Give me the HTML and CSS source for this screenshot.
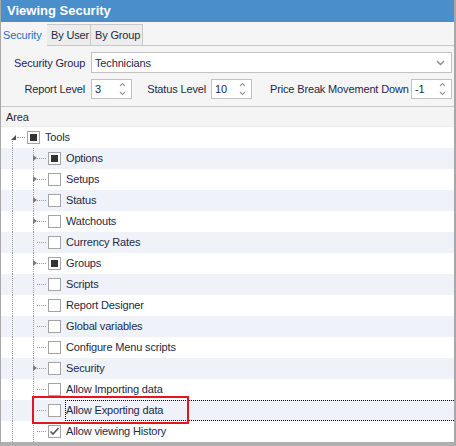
FILE: index.html
```html
<!DOCTYPE html>
<html>

<head>
  <meta charset="utf-8">
  <title>Viewing Security</title>
  <link rel="stylesheet" href="styles.css">
</head>

<body>
  <div class="window">
    <div class="titlebar">Viewing Security</div>

    <div class="tabs">
      <div class="tab active">Security</div>
      <div class="tab">By User</div>
      <div class="tab tab-group">By Group</div>
    </div>

    <div class="filters">
      <div class="filter-row">
        <label class="lbl lbl-first">Security Group</label>
        <div class="combo">
          <span class="combo-value">Technicians</span>
          <svg class="chevron" width="9" height="6" viewBox="0 0 9 6"><path d="M1 1 L4.5 4.5 L8 1" fill="none" stroke="#8a8a8a" stroke-width="1.4"/></svg>
        </div>
      </div>
      <div class="filter-row second">
        <label class="lbl lbl-first">Report Level</label>
        <div class="spin">
          <span>3</span>
          <svg class="spin-arrows" width="7" height="14" viewBox="0 0 7 14"><path d="M1 4 L3.5 1.5 L6 4 M1 10 L3.5 12.5 L6 10" fill="none" stroke="#9a9a9a" stroke-width="1.2"/></svg>
        </div>
        <label class="lbl lbl-status">Status Level</label>
        <div class="spin">
          <span>10</span>
          <svg class="spin-arrows" width="7" height="14" viewBox="0 0 7 14"><path d="M1 4 L3.5 1.5 L6 4 M1 10 L3.5 12.5 L6 10" fill="none" stroke="#9a9a9a" stroke-width="1.2"/></svg>
        </div>
        <label class="lbl lbl-price">Price Break Movement Down</label>
        <div class="spin spin-last">
          <span>-1</span>
          <svg class="spin-arrows" width="7" height="14" viewBox="0 0 7 14"><path d="M1 4 L3.5 1.5 L6 4 M1 10 L3.5 12.5 L6 10" fill="none" stroke="#9a9a9a" stroke-width="1.2"/></svg>
        </div>
      </div>
    </div>

    <div class="grid">
      <div class="grid-head">Area</div>
      <div class="tree">
        <div class="row">
          <div class="cell root"><span class="exp-open"></span></div>
          <span class="box partial"></span>
          <span class="text">Tools</span>
        </div>
        <div class="row alt">
          <div class="cell vline"></div>
          <div class="cell branch"><span class="exp"></span></div>
          <span class="box partial"></span>
          <span class="text">Options</span>
        </div>
        <div class="row">
          <div class="cell vline"></div>
          <div class="cell branch"><span class="exp"></span></div>
          <span class="box"></span>
          <span class="text">Setups</span>
        </div>
        <div class="row alt">
          <div class="cell vline"></div>
          <div class="cell branch"><span class="exp"></span></div>
          <span class="box"></span>
          <span class="text">Status</span>
        </div>
        <div class="row">
          <div class="cell vline"></div>
          <div class="cell branch"><span class="exp"></span></div>
          <span class="box"></span>
          <span class="text">Watchouts</span>
        </div>
        <div class="row alt">
          <div class="cell vline"></div>
          <div class="cell branch"></div>
          <span class="box"></span>
          <span class="text">Currency Rates</span>
        </div>
        <div class="row">
          <div class="cell vline"></div>
          <div class="cell branch"><span class="exp"></span></div>
          <span class="box partial"></span>
          <span class="text">Groups</span>
        </div>
        <div class="row alt">
          <div class="cell vline"></div>
          <div class="cell branch"></div>
          <span class="box"></span>
          <span class="text">Scripts</span>
        </div>
        <div class="row">
          <div class="cell vline"></div>
          <div class="cell branch"></div>
          <span class="box"></span>
          <span class="text">Report Designer</span>
        </div>
        <div class="row alt">
          <div class="cell vline"></div>
          <div class="cell branch"></div>
          <span class="box"></span>
          <span class="text">Global variables</span>
        </div>
        <div class="row">
          <div class="cell vline"></div>
          <div class="cell branch"></div>
          <span class="box"></span>
          <span class="text">Configure Menu scripts</span>
        </div>
        <div class="row alt">
          <div class="cell vline"></div>
          <div class="cell branch"><span class="exp"></span></div>
          <span class="box"></span>
          <span class="text">Security</span>
        </div>
        <div class="row">
          <div class="cell vline"></div>
          <div class="cell branch"></div>
          <span class="box"></span>
          <span class="text">Allow Importing data</span>
        </div>
        <div class="row alt">
          <div class="cell vline"></div>
          <div class="cell branch"></div>
          <span class="box"></span>
          <span class="text focused">Allow Exporting data</span>
        </div>
        <div class="row">
          <div class="cell vline"></div>
          <div class="cell branch"></div>
          <span class="box">
            <svg width="11" height="11" viewBox="0 0 11 11"><path d="M1.5 5.5 L4 8 L9.5 2" fill="none" stroke="#555" stroke-width="1.6"/></svg>
          </span>
          <span class="text">Allow viewing History</span>
        </div>

        <div class="highlight"></div>
      </div>
    </div>
  </div>
</body>

</html>
```

FILE: styles.css
```css
body {
  margin: 0;
  font-family: "Liberation Sans", Arial, sans-serif;
  font-size: 11px;
  letter-spacing: -0.15px;
  color: #1e2a45;
  background: #fff;
}

.window {
  width: 456px;
  box-sizing: border-box;
  border-left: 1px solid #a8a8a8;
  border-right: 2px solid #a8a8a8;
  border-bottom: 4px solid #b0b0b0;
  background-color: #f5f5f5;
}

.titlebar {
  height: 22px;
  line-height: 22px;
  padding-left: 6px;
  background-color: #4a8ecb;
  color: white;
  font-size: 13px;
  font-weight: bold;
  letter-spacing: 0;
}

.tabs {
  display: flex;
  align-items: flex-end;
  height: 23px;
  border-bottom: 1px solid #c8c8c8;
}

.tab {
  box-sizing: border-box;
  height: 21px;
  line-height: 21px;
  width: 44px;
  padding-left: 4px;
  background-color: #ededed;
  border: 1px solid #c8c8c8;
  border-bottom: none;
  border-left: none;
}

.tab.active {
  width: 46px;
  height: 24px;
  line-height: 26px;
  padding-left: 2px;
  margin-bottom: -1px;
  background-color: #f5f5f5;
  border: none;
  color: #1f6fc6;
}

.tab-group {
  width: 52px;
}

.filters {
  padding: 6px 2px 7px 13px;
  border-bottom: 1px solid #c8c8c8;
}

.filter-row {
  display: flex;
  align-items: center;
}

.filter-row.second {
  margin-top: 6px;
}

.lbl {
  flex: none;
  text-align: right;
  white-space: nowrap;
}

.lbl-first {
  width: 71px;
  margin-right: 6px;
}

.lbl-status {
  width: 61px;
  margin-left: 13px;
  margin-right: 5px;
}

.lbl-price {
  width: 135px;
  margin-left: 18px;
  margin-right: 6px;
}

.combo {
  flex: 1;
  display: flex;
  align-items: center;
  justify-content: space-between;
  height: 21px;
  box-sizing: border-box;
  padding: 0 6px 0 3px;
  background-color: white;
  border: 1px solid #c2c2c2;
}

.chevron {
  margin-top: 1px;
}

.spin {
  display: flex;
  align-items: center;
  justify-content: space-between;
  width: 41px;
  height: 20px;
  box-sizing: border-box;
  padding: 0 5px 0 3px;
  background-color: white;
  border: 1px solid #c2c2c2;
}

.grid {
  background-color: white;
}

.grid-head {
  height: 19px;
  line-height: 20px;
  padding-left: 5px;
  background-color: #f4f4f4;
  border-bottom: 1px solid #ececec;
  color: #2b2b2b;
}

.tree {
  position: relative;
}

.row {
  display: flex;
  align-items: center;
  height: 21px;
  padding-left: 1px;
  background-color: white;
}

.row.alt {
  background-color: #eff2f8;
}

.cell {
  position: relative;
  flex: none;
  width: 21px;
  height: 21px;
}

.cell.vline::before,
.cell.branch::before,
.cell.root::before {
  content: "";
  position: absolute;
  left: 10px;
  top: 0;
  bottom: 0;
  border-left: 1px dotted #9c9c9c;
}

.cell.root::before {
  top: 14px;
}

.cell.branch::after,
.cell.root::after {
  content: "";
  position: absolute;
  left: 14px;
  right: -2px;
  top: 10px;
  border-top: 1px dotted #9c9c9c;
}

.cell.root::after {
  left: 15px;
}

.exp {
  position: absolute;
  z-index: 1;
  left: 10px;
  top: 7px;
  width: 0;
  height: 0;
  border-top: 3px solid transparent;
  border-bottom: 3px solid transparent;
  border-left: 4px solid #7b7b7b;
}

.exp-open {
  position: absolute;
  z-index: 1;
  left: 9px;
  top: 8px;
  width: 0;
  height: 0;
  border-left: 5px solid transparent;
  border-bottom: 5px solid #4d4d4d;
}

.box {
  flex: none;
  display: flex;
  align-items: center;
  justify-content: center;
  width: 13px;
  height: 13px;
  box-sizing: border-box;
  margin-left: 4px;
  background-color: white;
  border: 1px solid #a3a3a3;
}

.box.partial::after {
  content: "";
  width: 7px;
  height: 7px;
  background-color: #333;
}

.text {
  flex: 1;
  height: 21px;
  box-sizing: border-box;
  line-height: 19px;
  margin-left: 4px;
  border-top: 1px solid transparent;
  border-bottom: 1px solid transparent;
  border-left: 1px solid transparent;
  white-space: nowrap;
}

.text.focused {
  border-top: 1px dotted #000;
  border-bottom: 1px dotted #000;
  border-left: 1px dotted #000;
}

.highlight {
  position: absolute;
  left: 31px;
  top: 269px;
  width: 157px;
  height: 28px;
  box-sizing: border-box;
  border: 2px solid #e3161b;
}
```
